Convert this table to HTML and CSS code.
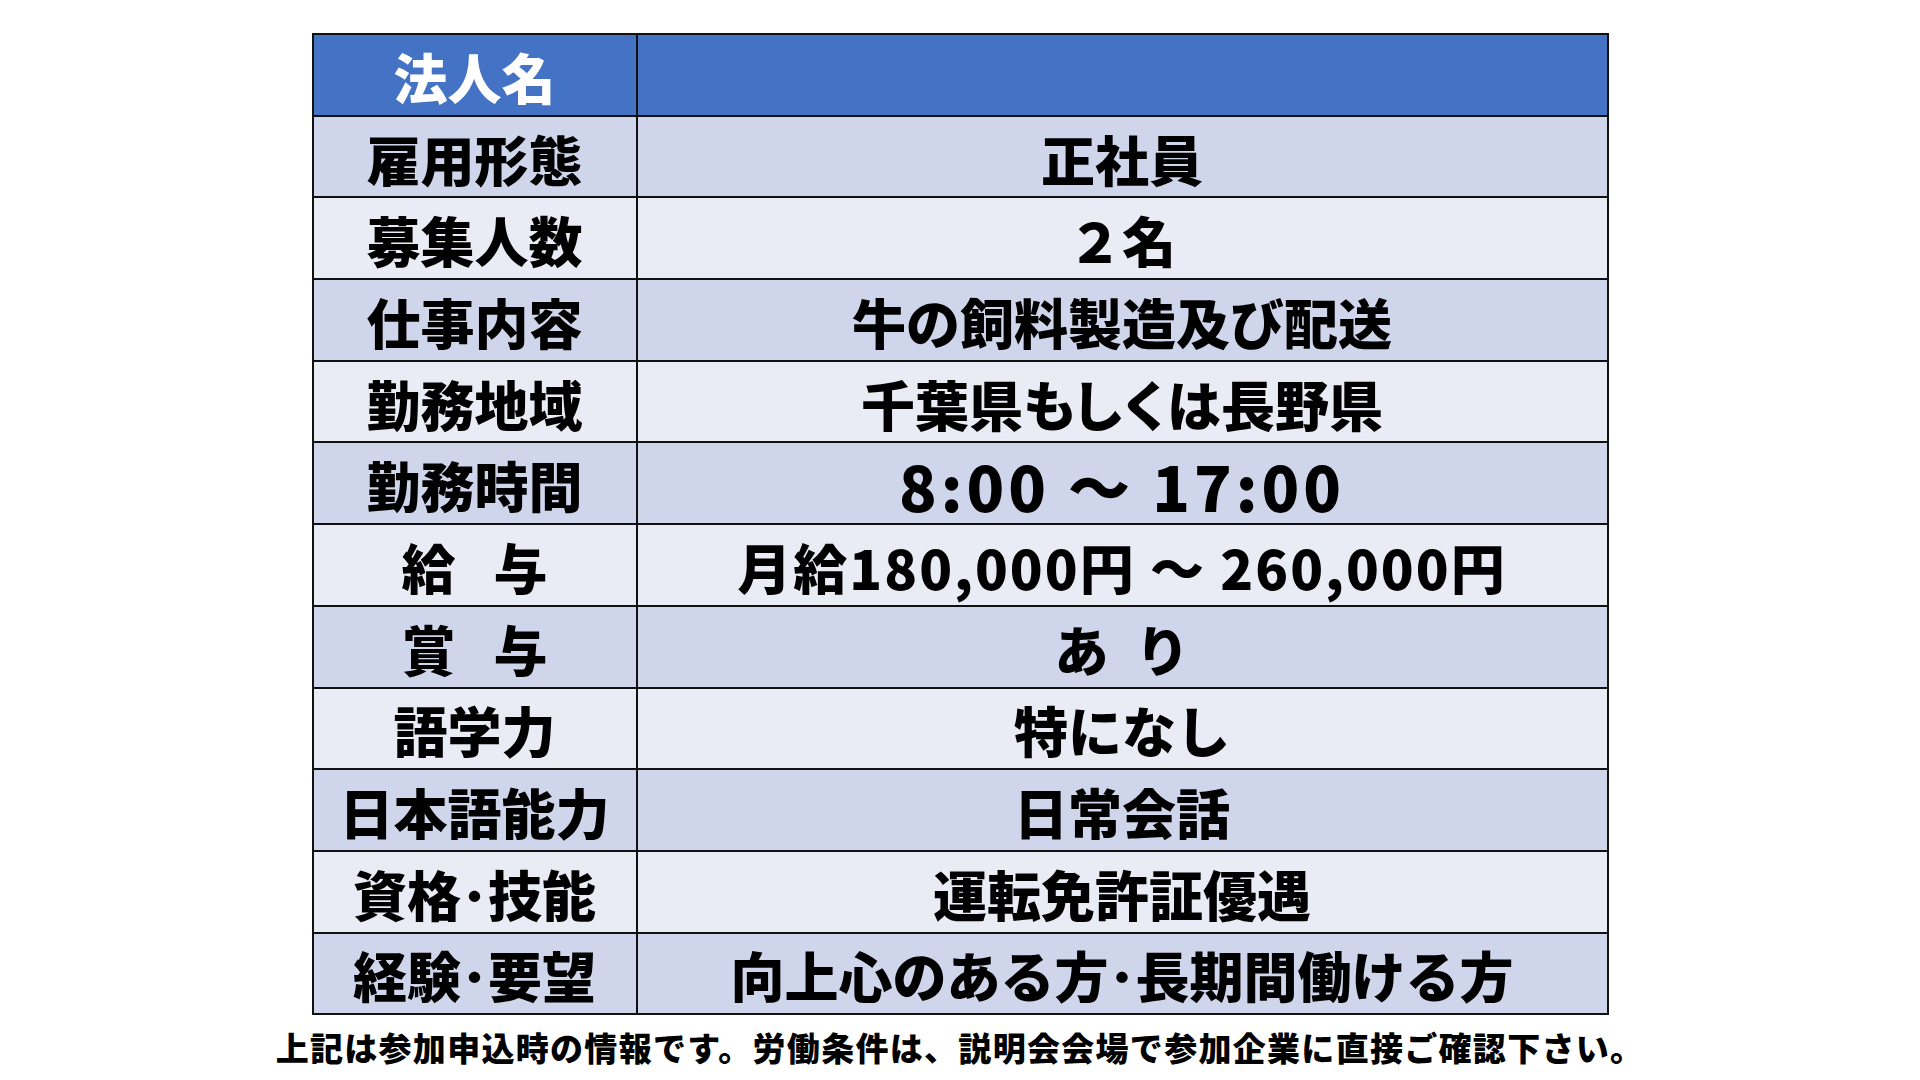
FILE: index.html
```html
<!DOCTYPE html>
<html lang="ja">
<head>
<meta charset="utf-8">
<title>求人情報</title>
<link rel="stylesheet" href="styles.css">
</head>
<body>
<main class="page">
  <table class="info">
    <tr class="head"><th class="label">法人名</th><td class="value"></td></tr>
    <tr class="odd"><th class="label">雇用形態</th><td class="value">正社員</td></tr>
    <tr class="even"><th class="label">募集人数</th><td class="value">２名</td></tr>
    <tr class="odd"><th class="label">仕事内容</th><td class="value">牛の飼料製造及び配送</td></tr>
    <tr class="even"><th class="label">勤務地域</th><td class="value">千葉県<span class="kana">もしくは</span>長野県</td></tr>
    <tr class="odd"><th class="label">勤務時間</th><td class="value time">8:00 ～ 17:00</td></tr>
    <tr class="even"><th class="label">給&ensp;&thinsp;与</th><td class="value salary">月給180,000円 ～ 260,000円</td></tr>
    <tr class="odd"><th class="label">賞&ensp;&thinsp;与</th><td class="value">あ&ensp;り</td></tr>
    <tr class="even"><th class="label">語学力</th><td class="value">特になし</td></tr>
    <tr class="odd"><th class="label">日本語能力</th><td class="value">日常会話</td></tr>
    <tr class="even"><th class="label">資格･技能</th><td class="value">運転免許証優遇</td></tr>
    <tr class="odd"><th class="label">経験･要望</th><td class="value">向上心のある方･長期間働ける方</td></tr>
  </table>
  <p class="note">上記は参加申込時の情報です。労働条件は、説明会会場で参加企業に直接ご確認下さい。</p>
</main>
</body>
</html>
```
FILE: styles.css
```css
html, body {
  margin: 0;
  padding: 0;
  background: #ffffff;
}
body {
  width: 1920px;
  height: 1080px;
  overflow: hidden;
  font-family: "Noto Sans CJK JP", "Noto Sans", sans-serif;
  color: #000;
}
.page {
  display: flex;
  flex-direction: column;
  align-items: center;
  padding-top: 33px;
}
.info {
  width: 1297px;
  border-collapse: collapse;
  border: 2px solid #111;
  table-layout: fixed;
}
.info tr {
  height: 81.7px;
}
.info th, .info td {
  border: 2px solid #111;
  padding: 0;
  padding-top: 4px;
  text-align: center;
  vertical-align: middle;
  font-weight: 900;
  font-size: 54px;
  line-height: 1;
  white-space: nowrap;
}
.info .label {
  width: 322px;
}
.head th, .head td {
  background: #4472c4;
  color: #ffffff;
}
.odd th, .odd td {
  background: #cfd5ea;
}
.even th, .even td {
  background: #e9ebf5;
}
.info .time {
  font-size: 62px;
  letter-spacing: 4px;
}
.info .salary {
  letter-spacing: 2px;
}
.kana {
  letter-spacing: -6px;
  margin-right: 6px;
}
.note {
  margin: 16px 0 0;
  font-size: 33px;
  font-weight: 900;
  line-height: 1;
  letter-spacing: 1.3px;
  white-space: nowrap;
}
```
